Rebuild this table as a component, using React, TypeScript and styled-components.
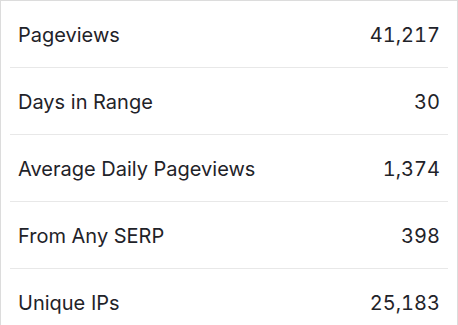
import React from "react"
import styled, { createGlobalStyle } from "styled-components"

const GlobalStyle = createGlobalStyle`
  html, body {
    margin: 0;
    padding: 0;
    background: #ffffff;
  }
  body {
    font-family: Inter, "Noto Sans", sans-serif;
  }
`

const Card = styled.div`
  width: 458px;
  height: 325px;
  box-sizing: border-box;
  border: 1px solid #dcdcdc;
  border-bottom: none;
  overflow: hidden;
  background: #fff;
`

const List = styled.ul`
  list-style: none;
  margin: 0;
  padding: 0 9px;
`

const Row = styled.li`
  display: flex;
  align-items: center;
  justify-content: space-between;
  height: 66px;
  padding: 1px 8px 0;
  box-sizing: border-box;
  height: 67px;
  border-bottom: 1px solid #e8e8e8;
  font-size: 20px;
  color: #1f2329;

  &:last-child {
    border-bottom: none;
  }
`

const Label = styled.span``

const Value = styled.span`
  font-variant-numeric: tabular-nums;
`

const stats = [
  { label: "Pageviews", value: "41,217" },
  { label: "Days in Range", value: "30" },
  { label: "Average Daily Pageviews", value: "1,374" },
  { label: "From Any SERP", value: "398" },
  { label: "Unique IPs", value: "25,183" },
]

export default function App() {
  return (
    <>
      <GlobalStyle />
      <Card>
        <List>
          {stats.map((s) => (
            <Row key={s.label}>
              <Label>{s.label}</Label>
              <Value>{s.value}</Value>
            </Row>
          ))}
        </List>
      </Card>
    </>
  )
}
